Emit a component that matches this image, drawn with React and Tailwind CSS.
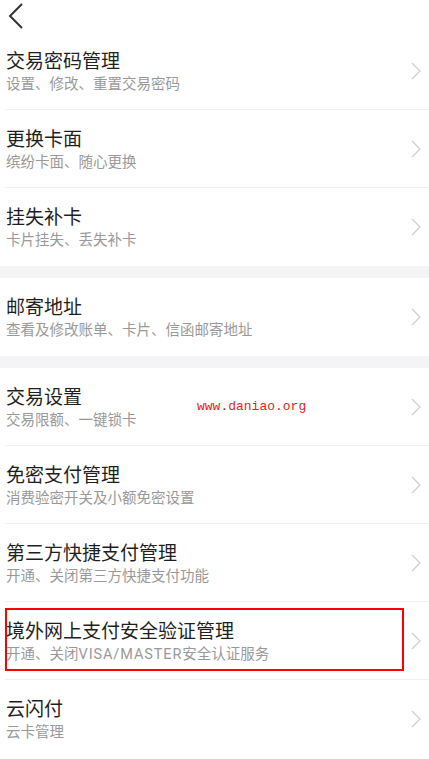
import React from 'react';

const sections = [
    [
        { title: '交易密码管理', sub: '设置、修改、重置交易密码' },
        { title: '更换卡面', sub: '缤纷卡面、随心更换' },
        { title: '挂失补卡', sub: '卡片挂失、丢失补卡' },
    ],
    [
        { title: '邮寄地址', sub: '查看及修改账单、卡片、信函邮寄地址' },
    ],
    [
        { title: '交易设置', sub: '交易限额、一键锁卡', mark: true },
        { title: '免密支付管理', sub: '消费验密开关及小额免密设置' },
        { title: '第三方快捷支付管理', sub: '开通、关闭第三方快捷支付功能' },
        {
            title: '境外网上支付安全验证管理',
            sub: (
                <>
                    开通、关闭<span className="tracking-[0.9px]">VISA/MASTER</span>安全认证服务
                </>
            ),
            boxed: true,
        },
        { title: '云闪付', sub: '云卡管理' },
    ],
];

const Chevron = () => (
    <svg width="10" height="18" viewBox="0 0 10 18" fill="none" className="shrink-0">
        <path d="M1 1l8 8-8 8" stroke="#d0d0d0" strokeWidth="1.3" />
    </svg>
);

const Row = ({ item, last }) => (
    <div className="relative h-[78px] flex items-center pl-[6px] pr-[8px]">
        <div className="flex-1 flex flex-col pt-[2px]">
            <span className="text-[19px] leading-[25px] text-[#1f1f1f]">{item.title}</span>
            <span className="text-[14.5px] leading-[21px] text-[#999]">{item.sub}</span>
        </div>
        <Chevron />
        {!last && <div className="absolute left-[5px] right-0 bottom-0 h-px bg-[#f0f0f0]" />}
        {item.mark && (
            <span className="absolute left-[197px] top-[29px] text-[13px] text-[#f01818]" style={{ fontFamily: '"Liberation Mono", monospace' }}>
                www.daniao.org
            </span>
        )}
        {item.boxed && <div className="absolute left-[5px] top-[6px] w-[399px] h-[63px] border-2 border-[#f00]" />}
    </div>
);

export default function App() {
    return (
        <div className="w-[429px] h-[759px] bg-white overflow-hidden" style={{ fontFamily: 'Roboto, "Noto Sans CJK SC", sans-serif' }}>
            <div className="h-[32px] flex items-center pl-[8px]">
                <svg width="16" height="26" viewBox="0 0 16 26" fill="none">
                    <path d="M14 1L2 13l12 12" stroke="#333" strokeWidth="2" />
                </svg>
            </div>
            {sections.map((rows, si) => (
                <div key={si}>
                    {si > 0 && <div className="h-[12px] bg-[#f4f4f6]" />}
                    {rows.map((item, i) => (
                        <Row key={i} item={item} last={i === rows.length - 1} />
                    ))}
                </div>
            ))}
        </div>
    );
}
